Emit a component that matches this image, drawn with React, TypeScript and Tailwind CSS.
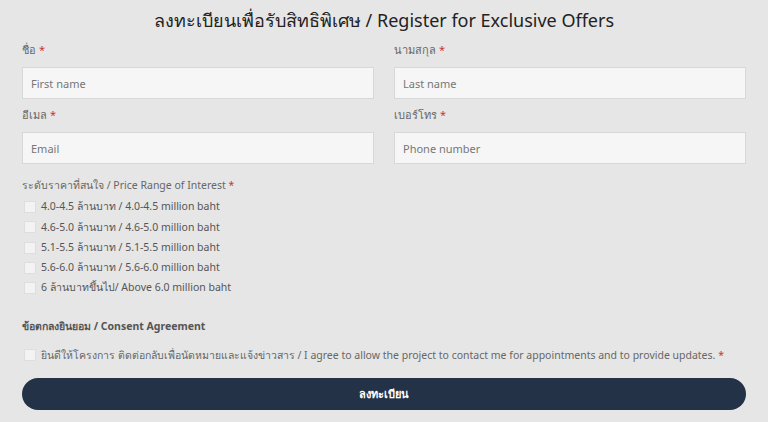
import { useState } from 'react'

const prices = [
  '4.0-4.5 ล้านบาท / 4.0-4.5 million baht',
  '4.6-5.0 ล้านบาท / 4.6-5.0 million baht',
  '5.1-5.5 ล้านบาท / 5.1-5.5 million baht',
  '5.6-6.0 ล้านบาท / 5.6-6.0 million baht',
  '6 ล้านบาทขึ้นไป/ Above 6.0 million baht',
]

function Field({ label, placeholder }: { label: string; placeholder: string }) {
  return (
    <div className="flex flex-col">
      <label className="h-4 text-[11px] leading-4 text-[#666]">
        {label} <span className="text-[#d0333a]">*</span>
      </label>
      <input
        placeholder={placeholder}
        className="mt-[9px] h-[32px] w-full border border-[#d8d8d8] bg-[#f6f6f6] px-[8px] text-[11px] text-[#444] placeholder:text-[#777] outline-none"
      />
    </div>
  )
}

function Box({ checked, onClick }: { checked: boolean; onClick: () => void }) {
  return (
    <button
      type="button"
      onClick={onClick}
      className={`h-[12px] w-[12px] shrink-0 border border-[#dedede] ${checked ? 'bg-[#243247]' : 'bg-[#f3f3f3]'}`}
    />
  )
}

export default function App() {
  const [picked, setPicked] = useState<number[]>([])
  const [agree, setAgree] = useState(false)

  const toggle = (i: number) =>
    setPicked((p) => (p.includes(i) ? p.filter((x) => x !== i) : [...p, i]))

  return (
    <div
      className="h-[422px] w-full overflow-hidden bg-[#e6e6e6] px-[22px]"
      style={{ fontFamily: '"Noto Sans", "Open Sans", sans-serif' }}
    >
      <h1 className="pt-[8px] text-center text-[18px] leading-6 text-[#222]">
        ลงทะเบียนเพื่อรับสิทธิพิเศษ / Register for Exclusive Offers
      </h1>

      <div className="mt-[10px] grid grid-cols-2 gap-x-[20px] gap-y-[8px]">
        <Field label="ชื่อ" placeholder="First name" />
        <Field label="นามสกุล" placeholder="Last name" />
        <Field label="อีเมล" placeholder="Email" />
        <Field label="เบอร์โทร" placeholder="Phone number" />
      </div>

      <div className="mt-[13px] h-4 text-[10.5px] leading-4 text-[#666]">
        ระดับราคาที่สนใจ / Price Range of Interest <span className="text-[#d0333a]">*</span>
      </div>
      <div className="mt-[4px] flex flex-col">
        {prices.map((p, i) => (
          <div key={p} className="flex h-[20.3px] items-center gap-[5px] pl-[2px]">
            <Box checked={picked.includes(i)} onClick={() => toggle(i)} />
            <span className="text-[10.5px] text-[#555]">{p}</span>
          </div>
        ))}
      </div>

      <div className="mt-[20px] h-4 text-[10.5px] font-bold leading-4 text-[#555]">
        ข้อตกลงยินยอม / Consent Agreement
      </div>
      <div className="mt-[13px] flex h-4 items-center gap-[5px] pl-[2px]">
        <Box checked={agree} onClick={() => setAgree(!agree)} />
        <span className="whitespace-nowrap text-[10.5px] text-[#666]">
          ยินดีให้โครงการ ติดต่อกลับเพื่อนัดหมายและแจ้งข่าวสาร / I agree to allow the project to contact me for
          appointments and to provide updates. <span className="text-[#d0333a]">*</span>
        </span>
      </div>

      <button
        type="button"
        className="mt-[15px] h-[32px] w-full rounded-full bg-[#243247] text-[11px] font-bold text-white"
      >
        ลงทะเบียน
      </button>
    </div>
  )
}
